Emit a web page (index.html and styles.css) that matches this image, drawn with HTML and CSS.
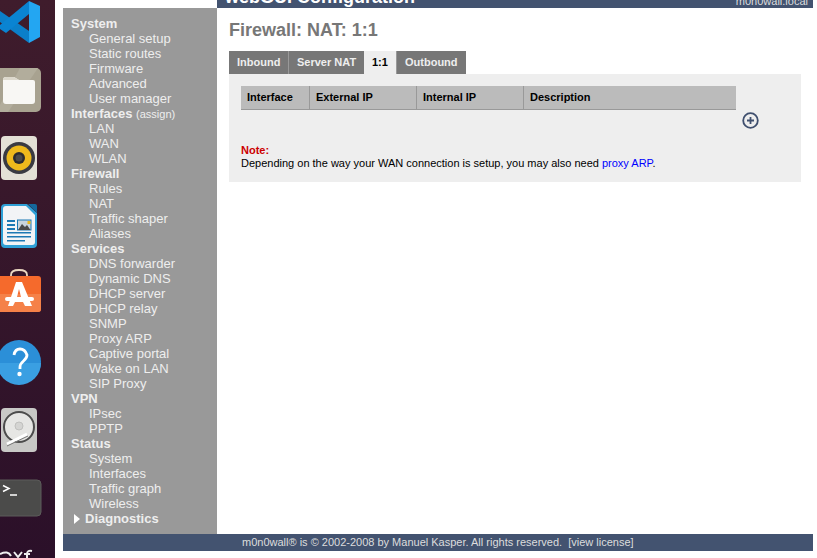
FILE: index.html
```html
<!DOCTYPE html>
<html lang="en">
<head>
<meta charset="utf-8">
<title>m0n0wall webGUI Configuration</title>
<link rel="stylesheet" href="styles.css">
</head>
<body>
<div class="screen">
  <nav class="dock">
    <svg class="dock-icon" viewBox="0 0 55 68">
      <path d="M0 11 29 31V43L0 22Z" fill="#0b7fc9"/>
      <path d="M29 1V14L6 33 0 29V25Z" fill="#0a84d2"/>
      <path d="M29 1 40 6V37L29 43Z" fill="#23a6f2"/>
    </svg>
    <svg class="dock-icon" viewBox="0 0 55 68">
      <rect x="-4" y="0" width="45" height="44" rx="5" fill="#a8a290"/>
      <path d="M20 0H38L8 44H-4Z" fill="#b2ad9c"/>
      <path d="M3 12Q3 9 6 9H14L19 12H33Q35 12 35 14V33Q35 36 32 36H6Q3 36 3 33Z" fill="#f8f7f4"/>
      <path d="M3 12Q3 9 6 9H14L19 12Z" fill="#dcd8cc"/>
    </svg>
    <svg class="dock-icon" viewBox="0 0 55 68">
      <rect x="1" y="0" width="36" height="44" rx="4" fill="#e4e0d6"/>
      <circle cx="19" cy="22" r="16" fill="#3a3a42"/>
      <circle cx="19" cy="22" r="12.500" fill="#eeb91c"/>
      <circle cx="19" cy="22" r="6" fill="#2b2b2f"/>
      <circle cx="19" cy="22" r="3.500" fill="#4a4a4a"/>
    </svg>
    <svg class="dock-icon" viewBox="0 0 55 68">
      <path d="M5 0H27L37 9V40Q37 44 33 44H5Q1 44 1 40V4Q1 0 5 0Z" fill="#2ea0d6"/>
      <path d="M6 2H26L35 11V38Q35 41 32 41H6Q3 41 3 38V5Q3 2 6 2Z" fill="#f2f4f6"/>
      <path d="M28 0 37 9V2Q37 0 35 0Z" fill="#14689c"/>
      <path d="M7 16H15V18H7ZM7 20H15V22H7ZM7 24H15V26H7ZM7 28H31V29.500H7ZM7 32H31V33.500H7ZM7 36H25V37.500H7Z" fill="#1b78b4"/>
      <rect x="17.500" y="16" width="13.500" height="10" fill="#c8d4dc" stroke="#1b78b4"/>
      <path d="M18 26 22 20 25 23 27 21 30.500 26Z" fill="#4a4a4a"/>
      <rect x="27.500" y="17" width="3" height="3" fill="#e8b820"/>
    </svg>
    <svg class="dock-icon" viewBox="0 0 55 68">
      <path d="M11 5V3Q11 -2 19 -2T27 3V5" fill="none" stroke="#ecd9c2" stroke-width="1.800"/>
      <rect x="-4" y="4" width="45" height="36" rx="3" fill="#f56a2c"/>
      <path d="M-4 22H41V37Q41 40 38 40H-1Q-4 40 -4 37Z" fill="#f58148"/>
      <path d="M16 10H22L32 34H25L23 30H15L13 34H8ZM17 25H21L19 17Z" fill="#fff"/>
      <rect x="5" y="25" width="29" height="4" rx="2" fill="#fff"/>
    </svg>
    <svg class="dock-icon" viewBox="0 0 55 68">
      <circle cx="19" cy="22" r="22" fill="#2b8fd8"/>
      <path d="M-3 23A22 22 0 0 0 41 23Z" fill="#3a9fe2"/>
      <path d="M14 15Q15 9 20 9T27 15C27 21 20 21 20 27V29" fill="none" stroke="#fff" stroke-width="2.800"/>
      <circle cx="19.500" cy="34" r="2.200" fill="#fff"/>
    </svg>
    <svg class="dock-icon" viewBox="0 0 55 68">
      <rect x="1" y="0" width="36" height="44" rx="4" fill="#c8c8c6"/>
      <circle cx="19" cy="19" r="15" fill="#e6e6e4" stroke="#4c4c4c" stroke-width="2"/>
      <circle cx="19" cy="18" r="4" fill="#d4d4d2" stroke="#c0c0be"/>
      <path d="M7 36 27 26" stroke="#fff" stroke-width="3"/>
      <path d="M7 38 28 28" stroke="#777"/>
    </svg>
    <svg class="dock-icon" viewBox="0 0 55 68">
      <rect x="-4" y="4" width="45" height="36" rx="4" fill="#4b4b4a" stroke="#5c5c5a"/>
      <path d="M3 9.500 9 12.500 3 15.500" fill="none" stroke="#fff" stroke-width="1.500"/>
      <path d="M10 19H17" stroke="#fff" stroke-width="1.500"/>
    </svg>
    <svg class="dock-icon" viewBox="0 0 55 68">
      <path d="M0 10Q8 6 11 12M14 8 18 13 22 8M32 7Q27 6 27 10V14M24 10H30" fill="none" stroke="#eee" stroke-width="2"/>
    </svg>
  </nav>
  <div class="page">
    <div class="top-spacer"></div>
    <header class="topbar">
      <span class="brand">webGUI Configuration</span>
      <span class="host">m0n0wall.local</span>
    </header>
    <aside class="sidebar">
      <div class="menu-head">System</div>
      <a class="menu-item">General setup</a>
      <a class="menu-item">Static routes</a>
      <a class="menu-item">Firmware</a>
      <a class="menu-item">Advanced</a>
      <a class="menu-item">User manager</a>
      <div class="menu-head">Interfaces <small class="assign">(assign)</small></div>
      <a class="menu-item">LAN</a>
      <a class="menu-item">WAN</a>
      <a class="menu-item">WLAN</a>
      <div class="menu-head">Firewall</div>
      <a class="menu-item">Rules</a>
      <a class="menu-item">NAT</a>
      <a class="menu-item">Traffic shaper</a>
      <a class="menu-item">Aliases</a>
      <div class="menu-head">Services</div>
      <a class="menu-item">DNS forwarder</a>
      <a class="menu-item">Dynamic DNS</a>
      <a class="menu-item">DHCP server</a>
      <a class="menu-item">DHCP relay</a>
      <a class="menu-item">SNMP</a>
      <a class="menu-item">Proxy ARP</a>
      <a class="menu-item">Captive portal</a>
      <a class="menu-item">Wake on LAN</a>
      <a class="menu-item">SIP Proxy</a>
      <div class="menu-head">VPN</div>
      <a class="menu-item">IPsec</a>
      <a class="menu-item">PPTP</a>
      <div class="menu-head">Status</div>
      <a class="menu-item">System</a>
      <a class="menu-item">Interfaces</a>
      <a class="menu-item">Traffic graph</a>
      <a class="menu-item">Wireless</a>
      <div class="menu-head menu-collapsed">
        <svg class="caret" viewBox="0 0 6 10"><path d="M0 0 6 5 0 10Z" fill="#fff"/></svg>
        Diagnostics
      </div>
    </aside>
    <main class="content">
      <h1 class="title">Firewall: NAT: 1:1</h1>
      <div class="tabs">
        <span class="tab tab-inbound">Inbound</span>
        <span class="tab tab-server">Server NAT</span>
        <span class="tab tab-active">1:1</span>
        <span class="tab tab-outbound">Outbound</span>
      </div>
      <section class="panel">
        <table class="rules">
          <thead>
            <tr>
              <th class="col-if">Interface</th>
              <th class="col-ext">External IP</th>
              <th class="col-int">Internal IP</th>
              <th class="col-desc">Description</th>
              <td class="col-add"></td>
            </tr>
          </thead>
          <tbody>
            <tr>
              <td colspan="4"></td>
              <td class="add-cell">
                <svg class="add-icon" viewBox="0 0 17 17">
                  <circle cx="8.500" cy="8.500" r="7.300" fill="none" stroke="#3f4f6e" stroke-width="1.800"/>
                  <path d="M8.500 5V12M5 8.500H12" stroke="#3f4f6e" stroke-width="1.800"/>
                </svg>
              </td>
            </tr>
          </tbody>
        </table>
        <p class="note"><strong class="note-label">Note:</strong><br>Depending on the way your WAN connection is setup, you may also need <a class="note-link">proxy ARP</a>.</p>
      </section>
    </main>
    <footer class="footer">m0n0wall® is © 2002-2008 by Manuel Kasper. All rights reserved.&nbsp; [view license]</footer>
  </div>
</div>
</body>
</html>
```
FILE: styles.css
```css
html, body {
  margin: 0;
  padding: 0;
  background: #fff;
}
.screen {
  display: flex;
  height: 558px;
  overflow: hidden;
  font-family: "Liberation Sans", Arial, sans-serif;
}
.dock {
  flex: none;
  width: 55px;
  height: 558px;
  overflow: hidden;
  background: linear-gradient(#3f1c2c, #2b1029);
}
.dock-icon {
  display: block;
  width: 55px;
  height: 68px;
  overflow: visible;
}
.page {
  flex: none;
  width: 750px;
  margin-left: 8px;
  display: grid;
  grid-template-columns: 154px 596px;
  grid-template-rows: 8px 526px 17px;
}
.topbar {
  display: flex;
  justify-content: space-between;
  align-items: flex-end;
  padding: 0 5px 0 8px;
  overflow: hidden;
  background: #435370;
  color: #fff;
}
.brand {
  font-size: 18px;
  font-weight: bold;
  line-height: 21px;
  flex: none;
}
.host {
  font-size: 11px;
  line-height: 13px;
  flex: none;
  color: #ddd;
}
.sidebar {
  padding: 8px 0 0 8px;
  background: #999;
  color: #eee;
  font-size: 13px;
  line-height: 15px;
}
.menu-head {
  height: 15px;
  font-weight: bold;
}
.assign {
  font-size: 11px;
  font-weight: normal;
}
.menu-item {
  display: block;
  height: 15px;
  margin-left: 18px;
}
.menu-collapsed {
  display: flex;
  align-items: center;
  gap: 5px;
  padding-left: 3px;
}
.caret {
  width: 6px;
  height: 10px;
}
.content {
  padding: 12px 12px 0;
}
.title {
  margin: 0;
  font-size: 18px;
  line-height: 21px;
  font-weight: bold;
  color: #777;
}
.tabs {
  display: flex;
  margin-top: 10px;
  height: 23px;
  font-size: 11px;
  line-height: 23px;
  font-weight: bold;
}
.tab {
  box-sizing: border-box;
  padding-left: 8px;
  background: #777;
  color: #eee;
}
.tab-inbound { width: 60px; border-right: 1px solid #999; }
.tab-server { width: 75px; }
.tab-active { width: 33px; background: #eee; color: #000; border-right: 1px solid #999; }
.tab-outbound { width: 69px; }
.panel {
  height: 108px;
  box-sizing: border-box;
  padding: 12px;
  background: #eee;
  font-size: 11px;
  line-height: 13px;
  color: #000;
}
.rules {
  border-collapse: separate;
  border-spacing: 0;
  table-layout: fixed;
  width: 524px;
}
.rules th {
  box-sizing: border-box;
  height: 24px;
  padding: 0 6px;
  background: #bbb;
  border-right: 1px solid #999;
  border-bottom: 1px solid #999;
  text-align: left;
  font-size: 11px;
}
.rules th.col-desc { border-right: 0; }
.col-if { width: 69px; }
.col-ext { width: 107px; }
.col-int { width: 107px; }
.col-desc { width: 212px; }
.col-add { width: 29px; }
.rules td { padding: 0; }
.add-cell {
  height: 21px;
  vertical-align: top;
}
.add-icon {
  display: block;
  width: 17px;
  height: 17px;
  margin: 2px 0 0 6px;
}
.note {
  margin: 13px 0 0;
}
.note-label { color: #c00; }
.note-link { color: #00f; }
.footer {
  grid-column: 1 / 3;
  padding-left: 179px;
  background: #435370;
  color: #ddd;
  font-size: 11px;
  line-height: 17px;
}
```
